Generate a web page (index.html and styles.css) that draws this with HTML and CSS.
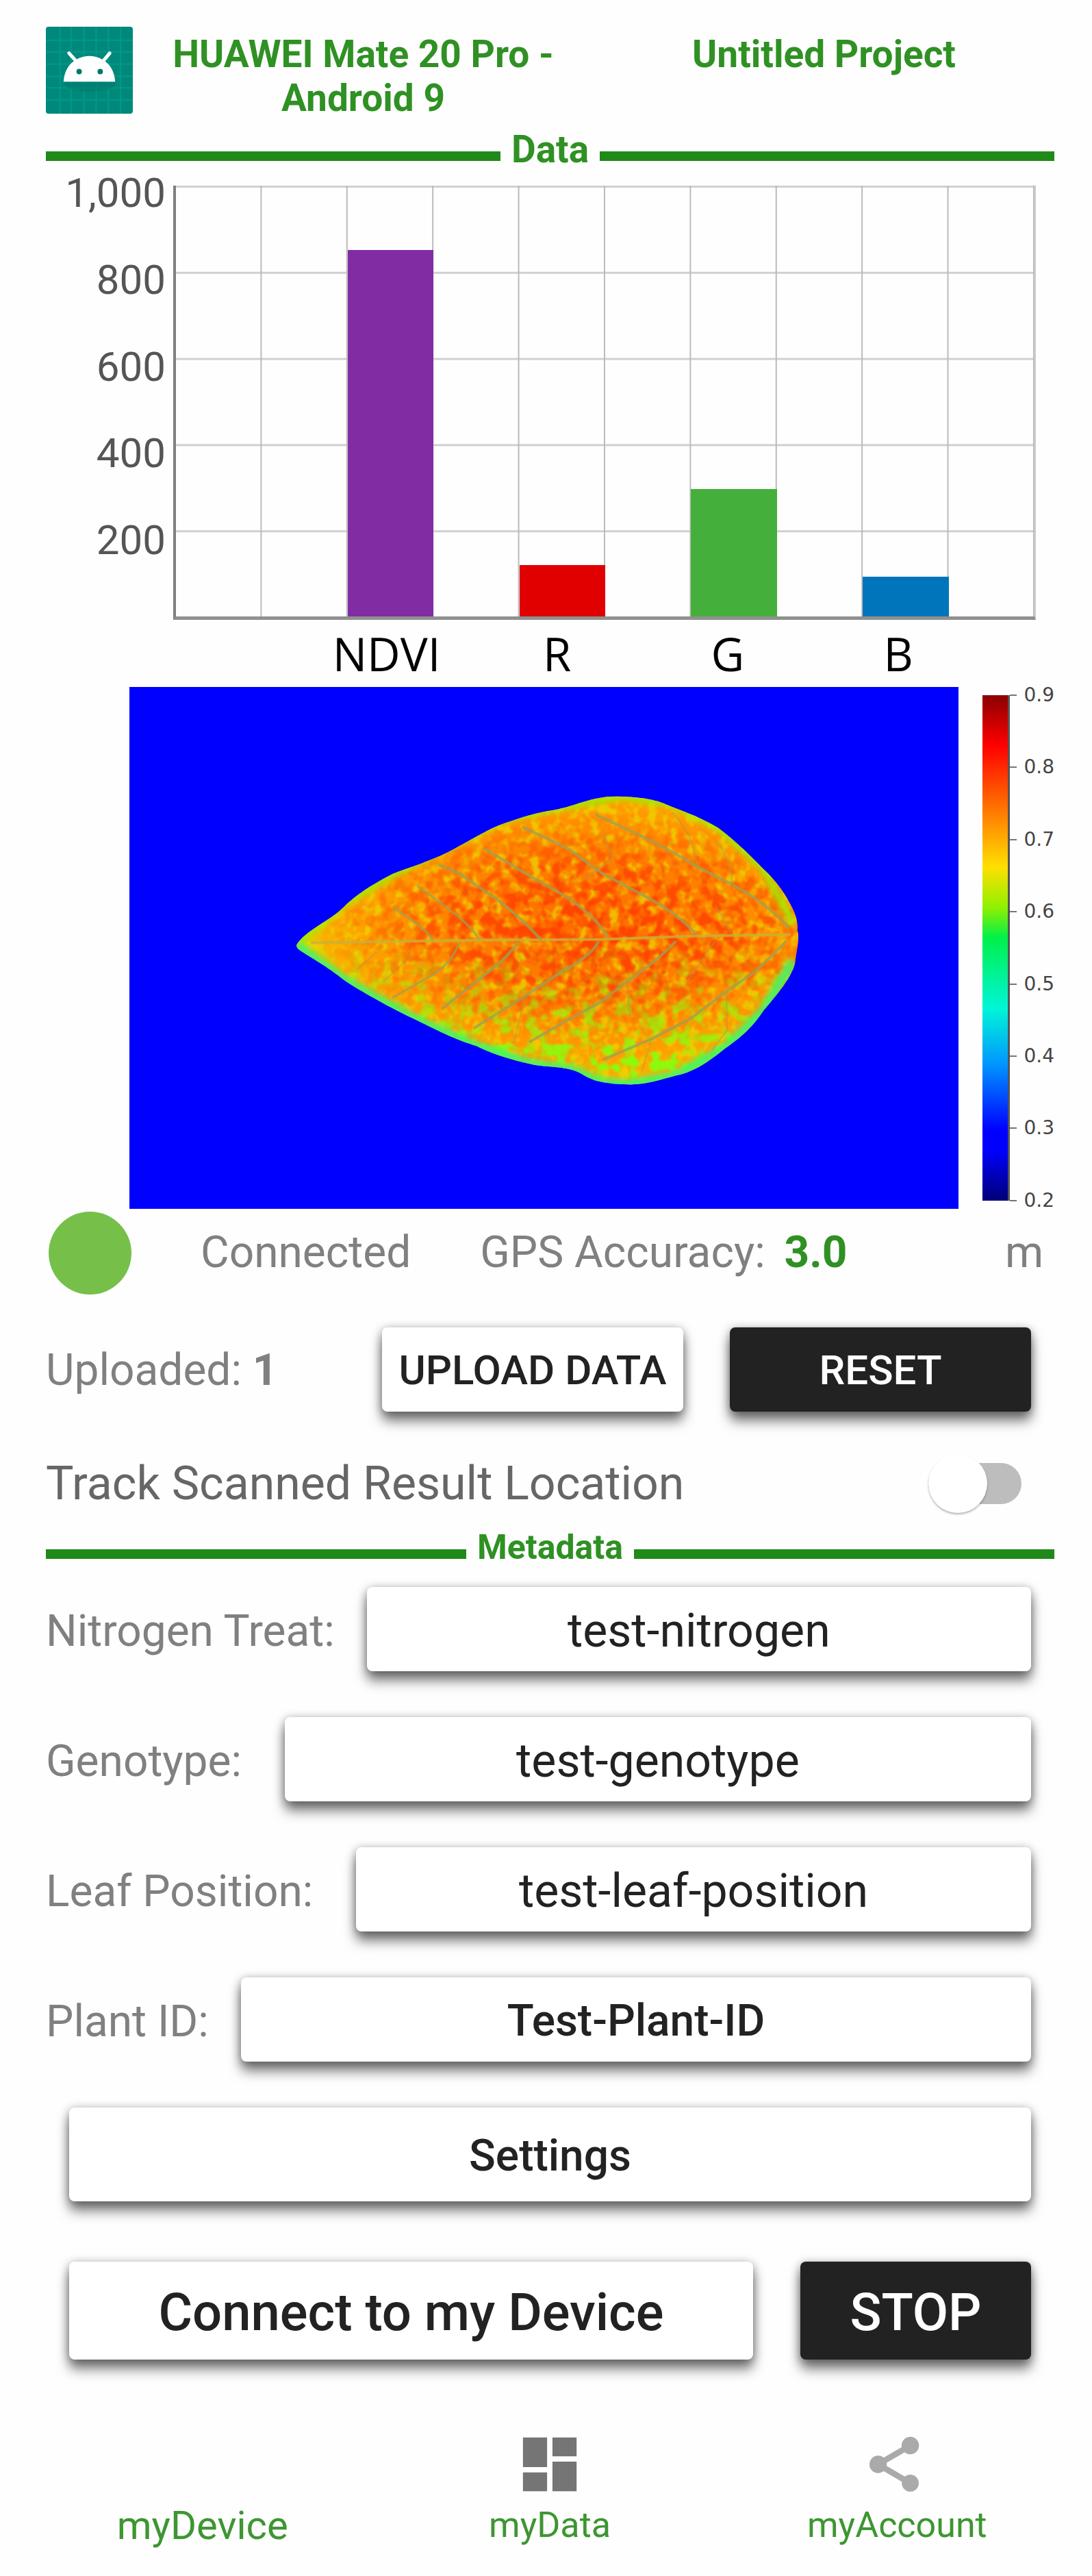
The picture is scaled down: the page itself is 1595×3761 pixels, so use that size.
FILE: index.html
```html
<!DOCTYPE html>
<html lang="en">
<head>
  <meta charset="utf-8">
  <title>Untitled Project</title>
  <link rel="stylesheet" href="styles.css">
</head>
<body>
  <header class="top-bar">
    <svg class="logo" viewBox="0 0 128 128">
      <rect width="128" height="128" fill="#00897b"/>
      <path d="M21 0V128M37 0V128M56 0V128M74 0V128M92 0V128M110 0V128M0 20H128M0 37H128M0 55H128M0 73H128M0 90H128M0 108H128" stroke="#00998a" stroke-width="2"/>
      <path d="M27 82H102V88Q66 102 32 90Z" fill="#00796b" opacity=".6"/>
      <path d="M26 81C27 65 34 54 45 48Q64 38 83 48C94 54 101 65 102 81Z" fill="#fff"/>
      <path d="M34 39L45 51M94 39L84 51" stroke="#fff" stroke-width="5" stroke-linecap="round"/>
      <circle cx="49" cy="66" r="4" fill="#00796b"/>
      <circle cx="80" cy="66" r="4" fill="#00796b"/>
    </svg>
    <h1 class="heading">HUAWEI Mate 20 Pro - Android 9</h1>
    <h1 class="heading">Untitled Project</h1>
  </header>

  <main>
    <h2 class="divider">Data</h2>

    <div class="chart">
      <div class="y-labels">
        <span>1,000</span>
        <span>800</span>
        <span>600</span>
        <span>400</span>
        <span>200</span>
      </div>
      <div class="plot">
        <div class="bar ndvi" style="height: 85%"></div>
        <div class="bar red" style="height: 12%"></div>
        <div class="bar green" style="height: 29.5%"></div>
        <div class="bar blue" style="height: 9.2%"></div>
      </div>
      <div class="x-labels">
        <span class="ndvi-label">NDVI</span>
        <span class="red-label">R</span>
        <span class="green-label">G</span>
        <span class="blue-label">B</span>
      </div>
    </div>

    <div class="scan">
      <svg class="leaf" viewBox="0 0 1210 761">
        <defs>
          <path id="leaf-shape" transform="translate(211 97) scale(.51 .344)" d="M65 810C90 750 160 710 200 650C240 590 300 540 340 510C400 475 460 450 520 400C570 360 620 315 660 295C710 270 750 250 800 240C870 220 910 180 985 182C1050 185 1090 195 1120 215C1180 250 1220 270 1270 315C1320 370 1360 430 1400 490C1430 530 1455 580 1470 620C1490 670 1500 710 1497 750C1505 780 1495 830 1490 890C1480 950 1440 1020 1400 1090C1370 1160 1330 1210 1290 1250C1240 1310 1200 1350 1150 1365C1100 1385 1060 1405 1010 1403C980 1402 960 1400 930 1390C890 1375 880 1350 850 1340C810 1325 770 1330 730 1315C670 1295 620 1270 580 1240C510 1210 450 1160 400 1125C330 1075 250 1010 200 960C150 900 100 860 75 835Q62 822 65 810Z"/>
          <clipPath id="leaf-clip"><use href="#leaf-shape"/></clipPath>
          <radialGradient id="leaf-fill" cx=".58" cy=".46" r=".58">
            <stop offset="0" stop-color="#ff6a00"/>
            <stop offset=".45" stop-color="#ff8000"/>
            <stop offset=".8" stop-color="#ffa400"/>
            <stop offset="1" stop-color="#f0c800"/>
          </radialGradient>
          <linearGradient id="low-fill" x2="0" y2="1">
            <stop offset=".5" stop-color="#fff" stop-opacity="0"/>
            <stop offset=".9" stop-color="#fff"/>
          </linearGradient>
          <radialGradient id="mid-fill">
            <stop offset="0" stop-color="#fff"/>
            <stop offset=".5" stop-color="#fff" stop-opacity=".8"/>
            <stop offset="1" stop-color="#fff" stop-opacity="0"/>
          </radialGradient>
          <mask id="low-part"><rect x="230" y="150" width="760" height="440" fill="url(#low-fill)"/></mask>
          <mask id="mid-part"><ellipse cx="680" cy="350" rx="420" ry="165" fill="url(#mid-fill)"/></mask>
          <filter id="yellow-spots" color-interpolation-filters="sRGB">
            <feTurbulence type="fractalNoise" baseFrequency=".07" numOctaves="2" seed="4"/>
            <feColorMatrix values="0 0 0 0 .92  0 0 0 0 .86  0 0 0 0 0  4 0 0 0 -1.8"/>
          </filter>
          <filter id="red-spots" color-interpolation-filters="sRGB">
            <feTurbulence type="fractalNoise" baseFrequency=".06" numOctaves="2" seed="9"/>
            <feColorMatrix values="0 0 0 0 1  0 0 0 0 .25  0 0 0 0 0  4 0 0 0 -1.6"/>
          </filter>
          <filter id="green-spots" color-interpolation-filters="sRGB">
            <feTurbulence type="fractalNoise" baseFrequency=".05" numOctaves="2" seed="15"/>
            <feColorMatrix values="0 0 0 0 .55  0 0 0 0 .98  0 0 0 0 .05  5 0 0 0 -2.4"/>
          </filter>
          <filter id="soft"><feGaussianBlur stdDeviation="4"/></filter>
        </defs>
        <rect width="1210" height="761" fill="#00f"/>
        <g clip-path="url(#leaf-clip)">
          <rect x="240" y="155" width="740" height="430" fill="url(#leaf-fill)"/>
          <rect x="240" y="155" width="740" height="430" filter="url(#yellow-spots)" opacity=".7"/>
          <g mask="url(#mid-part)"><rect x="240" y="155" width="740" height="430" filter="url(#red-spots)"/></g>
          <g mask="url(#low-part)"><rect x="240" y="155" width="740" height="430" filter="url(#green-spots)"/></g>
          <path d="M244 376L307 320L387 272L475 228L545 193L614 178L720 159L790 170L860 205L925 265L968 345" fill="none" stroke="#9cf000" stroke-width="10" filter="url(#soft)"/>
          <path d="M244 376L313 427L415 484L507 524L583 549L645 558L685 576L726 580L797 567L869 527L925 472L968 400" fill="none" stroke="#3ef76a" stroke-width="13" filter="url(#soft)"/>
          <g fill="none" stroke="#a0a050" stroke-opacity=".8" stroke-width="4" stroke-linejoin="round">
            <path d="M265 373L520 369L690 368L830 363L965 361" stroke="#c8b03a"/>
            <path d="M963 352Q930 315 879 288L828 262Q780 232 731 210L680 186"/>
            <path d="M826 360Q800 330 752 305L690 272L639 235L573 204"/>
            <path d="M698 364Q680 335 639 307L578 272L517 235"/>
            <path d="M601 369Q575 340 537 310L481 272L451 259"/>
            <path d="M512 369Q490 340 466 324L420 290" stroke-width="3"/>
            <path d="M443 369Q430 350 384 321" stroke-width="3"/>
            <path d="M958 371Q930 400 910 417L871 444L818 484L762 513L690 544"/>
            <path d="M797 371Q770 400 726 429L690 458L634 489L583 518"/>
            <path d="M685 371Q670 395 634 413L578 450L502 498"/>
            <path d="M568 372Q550 395 527 413L456 469"/>
            <path d="M481 373Q470 405 435 424L384 453" stroke-width="3"/>
            <path d="M362 386L332 412M410 393L370 430M854 371L813 431M879 288Q880 255 856 224M828 262Q823 215 792 183M877 358L855 318M726 429L730 480M871 444L872 500L850 530M762 513L748 560M578 450L560 520M665 280L705 250L690 210" stroke-width="2" stroke-opacity=".5"/>
          </g>
        </g>
      </svg>
      <div class="color-bar"></div>
      <div class="scale">
        <span>0.9</span>
        <span>0.8</span>
        <span>0.7</span>
        <span>0.6</span>
        <span>0.5</span>
        <span>0.4</span>
        <span>0.3</span>
        <span>0.2</span>
      </div>
    </div>

    <div class="status">
      <span class="dot"></span>
      <span>Connected</span>
      <span>GPS Accuracy: <b class="accuracy">3.0</b></span>
      <span class="unit">m</span>
    </div>

    <div class="upload">
      <span class="uploaded">Uploaded: <b>1</b></span>
      <button class="btn upper">UPLOAD DATA</button>
      <button class="btn upper dark">RESET</button>
    </div>

    <div class="track">
      <label for="track">Track Scanned Result Location</label>
      <input type="checkbox" class="switch" id="track">
    </div>

    <h2 class="divider small">Metadata</h2>

    <div class="meta">
      <div class="field">
        <label for="nitrogen">Nitrogen Treat:</label>
        <button class="btn" id="nitrogen">test-nitrogen</button>
      </div>
      <div class="field">
        <label for="genotype">Genotype:&nbsp;</label>
        <button class="btn" id="genotype">test-genotype</button>
      </div>
      <div class="field">
        <label for="position">Leaf Position:&nbsp;</label>
        <button class="btn" id="position">test-leaf-position</button>
      </div>
      <div class="field">
        <label for="plant">Plant ID:</label>
        <button class="btn medium" id="plant">Test-Plant-ID</button>
      </div>
    </div>

    <button class="btn medium settings">Settings</button>

    <div class="actions">
      <button class="btn large connect">Connect to my Device</button>
      <button class="btn large dark stop">STOP</button>
    </div>
  </main>

  <nav class="tabs">
    <a href="#device" class="tab active">myDevice</a>
    <a href="#data" class="tab">
      <svg class="tab-icon" viewBox="0 0 24 24" fill="#757575"><path d="M2 2h9v11H2zM13 2h9v7h-9zM13 11h9v11h-9zM2 15h9v7H2z"/></svg>
      myData
    </a>
    <a href="#account" class="tab">
      <svg class="tab-icon" viewBox="0 0 24 24" fill="#aaa"><path d="M17 16.080c-.76 0-1.440.3-1.960.77L7.910 12.700c.05-.23.09-.46.09-.7s-.04-.47-.09-.7l7.050-4.110c.54.5 1.250.81 2.040.81 1.660 0 3-1.340 3-3s-1.340-3-3-3-3 1.340-3 3c0 .24.04.47.09.7L7.040 9.810C6.500 9.310 5.790 9 5 9c-1.660 0-3 1.340-3 3s1.340 3 3 3c.79 0 1.500-.31 2.040-.81l7.120 4.160c-.05.21-.08.43-.08.65 0 1.610 1.310 2.920 2.920 2.920s2.920-1.310 2.920-2.920-1.310-2.920-2.920-2.920z" stroke="#aaa" stroke-width=".5"/></svg>
      myAccount
    </a>
  </nav>
</body>
</html>
```
FILE: styles.css
```css
* {
  margin: 0;
  padding: 0;
  box-sizing: border-box;
}

body {
  font-family: Roboto, sans-serif;
  font-size: 64px;
  line-height: 76px;
  background-color: #fefefe;
  color: #808080;
}

main {
  padding: 0 55px 0 67px;
}

.top-bar {
  display: grid;
  grid-template-columns: 127px 1fr 1fr;
  padding: 39px 55px 13px 67px;
}

.logo {
  width: 127px;
  height: 127px;
  border-radius: 4px;
}

.heading {
  margin-top: 8px;
  font-size: 55px;
  font-weight: 700;
  line-height: 64px;
  text-align: center;
  color: #2f9123;
}

/* title with a line on each side */
.divider {
  display: flex;
  align-items: flex-end;
  gap: 16px;
  font-size: 55px;
  font-weight: 700;
  line-height: 60px;
  color: #2f9123;
}

.divider::before,
.divider::after {
  content: '';
  flex: 1;
  height: 14px;
  margin-bottom: 13px;
  background-color: #1f8a19;
}

.divider.small {
  margin-top: 25px;
  font-size: 50px;
}

/* chart */
.chart {
  display: grid;
  grid-template-columns: 175px 1fr;
  column-gap: 11px;
  margin: 23px 27px 0 0;
}

.y-labels {
  display: flex;
  flex-direction: column;
  text-align: right;
  font-size: 60px;
  line-height: 22px;
  color: #555;
}

.y-labels span {
  flex: 1;
}

.plot {
  display: grid;
  grid-template-columns: repeat(10, 1fr);
  align-items: end;
  aspect-ratio: 1260 / 634;
  border-left: 4px solid #808080;
  border-bottom: 5px solid #909090;
  border-right: 2px solid #ccc;
  background-image:
    linear-gradient(to left, #bbb 2px, transparent 2px),
    linear-gradient(#d0d0d0 3px, transparent 3px);
  background-size: 10% 20%;
}

.ndvi { grid-column: 3; background-color: #812ca3; }
.red { grid-column: 5; background-color: #e10000; }
.green { grid-column: 7; background-color: #45af3b; }
.blue { grid-column: 9; background-color: #0075bb; }

.x-labels {
  grid-column: 2;
  display: grid;
  grid-template-columns: repeat(10, 1fr);
  justify-items: center;
  padding-right: 14px;
  font-family: "Open Sans", sans-serif;
  font-size: 67px;
  line-height: 98px;
  color: #000;
}

.ndvi-label { grid-column: 2 / 5; }
.red-label { grid-column: 5; }
.green-label { grid-column: 7; }
.blue-label { grid-column: 9; }

/* scanned leaf */
.scan {
  display: flex;
  padding-left: 122px;
}

.leaf {
  flex: 1;
  min-width: 0;
}

.color-bar {
  width: 40px;
  margin: 12px 0 12px 35px;
  border-right: 3px solid #555;
  background-image: linear-gradient(#8b0000, #f00 10%, #ff8c00 25%, #ffe000 34%, #90f000 42%, #00f04a 48%, #00f5d8 62%, #0096ff 73%, #00f 86%, #00f 90%, #000078);
}

.scale {
  display: flex;
  flex-direction: column;
  justify-content: space-between;
  font-family: "DejaVu Sans", sans-serif;
  font-size: 28px;
  line-height: 24px;
  color: #444;
}

.scale span {
  display: flex;
  align-items: center;
  gap: 10px;
}

.scale span::before {
  content: '';
  width: 10px;
  height: 2px;
  background-color: #777;
}

/* status */
.status {
  display: flex;
  align-items: center;
  gap: 101px;
  margin-top: 4px;
  padding: 0 16px 0 4px;
}

.dot {
  width: 121px;
  height: 121px;
  border-radius: 50%;
  background-color: #76c04a;
}

.accuracy {
  margin-left: 12px;
  color: #2f9123;
}

.unit {
  margin-left: auto;
}

.upload {
  display: flex;
  align-items: center;
  gap: 68px;
  margin-top: 48px;
  padding-right: 34px;
}

.uploaded {
  flex: 1;
  padding-top: 4px;
}

.track {
  display: flex;
  align-items: center;
  justify-content: space-between;
  margin-top: 67px;
  padding-right: 48px;
  font-size: 68px;
  color: #666;
}

.switch {
  appearance: none;
  display: flex;
  align-items: center;
  width: 136px;
  height: 60px;
  border-radius: 30px;
  background-color: #bdbdbd;
}

.switch::before {
  content: '';
  width: 86px;
  height: 86px;
  border-radius: 50%;
  background-color: #fff;
  box-shadow: 0 2px 3px rgba(0, 0, 0, 0.3);
}

/* buttons */
.btn {
  height: 123px;
  border: none;
  border-radius: 8px;
  font: inherit;
  color: #222;
  background-color: #fff;
  box-shadow: 0 14px 18px rgba(0, 0, 0, 0.5), 0 2px 14px rgba(0, 0, 0, 0.35);
  cursor: pointer;
}

.btn.upper {
  width: 440px;
  padding-top: 4px;
  font-size: 60px;
  font-weight: 500;
}

.btn.large {
  height: 143px;
  padding-top: 6px;
  font-size: 76px;
  font-weight: 500;
}

.btn.dark {
  color: #fff;
  background-color: #222;
}

.meta {
  display: flex;
  flex-direction: column;
  gap: 67px;
  margin-top: 28px;
}

.field {
  display: flex;
  align-items: center;
  gap: 47px;
  padding-right: 34px;
}

.field label {
  padding-top: 8px;
}

.field .btn {
  flex: 1;
  padding-top: 6px;
  font-size: 68px;
}

.btn.medium,
.field .btn.medium {
  padding-top: 6px;
  font-size: 64px;
  font-weight: 500;
}

.settings {
  display: block;
  width: calc(100% - 68px);
  height: 137px;
  margin: 67px 34px 0;
}

.actions {
  display: flex;
  gap: 69px;
  margin: 88px 34px 0;
}

.connect {
  flex: 1;
}

.stop {
  width: 337px;
}

/* bottom tabs */
.tabs {
  display: grid;
  grid-template-columns: repeat(3, 1fr);
  align-items: end;
  margin-top: 106px;
  padding: 0 31px 0 42px;
}

.tab {
  display: flex;
  flex-direction: column;
  align-items: center;
  gap: 4px;
  font-size: 52px;
  color: #3d9632;
  text-decoration: none;
}

.tab.active {
  font-size: 58px;
}

.tab-icon {
  width: 94px;
  height: 94px;
}
```
